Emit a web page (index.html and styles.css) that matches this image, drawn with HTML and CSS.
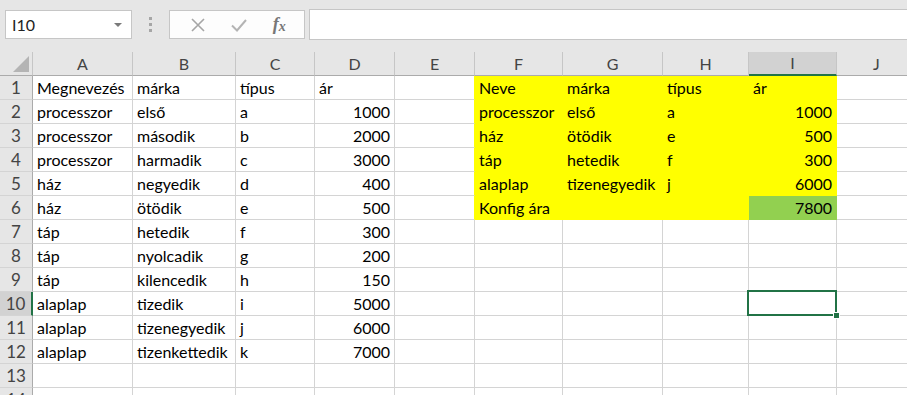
FILE: index.html
```html
<!DOCTYPE html>
<html lang="hu">
<head>
<meta charset="UTF-8">
<title>Munkafüzet</title>
<link rel="stylesheet" href="styles.css">
</head>
<body>
<div class="toolbar">
  <div class="namebox">
    <span class="ref">I10</span>
    <span class="caret"></span>
  </div>
  <div class="grip"><i></i><i></i><i></i></div>
  <div class="fbtns">
    <svg class="ico" width="16" height="16" viewBox="0 0 16 16"><path d="M2 2 L14 14 M14 2 L2 14" stroke="#a6a6a6" stroke-width="1.6" fill="none"/></svg>
    <svg class="ico" width="18" height="16" viewBox="0 0 18 16"><path d="M2 8.5 L7 13.5 L16 3" stroke="#b4b4b4" stroke-width="2" fill="none"/></svg>
    <span class="fx">f<sub>x</sub></span>
  </div>
  <div class="finput"></div>
</div>

<table class="sheet">
  <thead>
    <tr>
      <th class="corner c0"><span class="tri"></span></th>
      <th class="cA">A</th><th class="cB">B</th><th class="cC">C</th><th class="cD">D</th>
      <th class="cE">E</th><th class="cF">F</th><th class="cG">G</th><th class="cH">H</th>
      <th class="cI sel-col">I</th><th class="cJ">J</th>
    </tr>
  </thead>
  <tbody>
    <tr><th>1</th><td>Megnevezés</td><td>márka</td><td>típus</td><td>ár</td><td class="ye-edge"></td><td class="ye">Neve</td><td class="ye">márka</td><td class="ye">típus</td><td class="ye">ár</td><td></td></tr>
    <tr><th>2</th><td>processzor</td><td>első</td><td>a</td><td class="num">1000</td><td class="ye-edge"></td><td class="ye">processzor</td><td class="ye">első</td><td class="ye">a</td><td class="ye num">1000</td><td></td></tr>
    <tr><th>3</th><td>processzor</td><td>második</td><td>b</td><td class="num">2000</td><td class="ye-edge"></td><td class="ye">ház</td><td class="ye">ötödik</td><td class="ye">e</td><td class="ye num">500</td><td></td></tr>
    <tr><th>4</th><td>processzor</td><td>harmadik</td><td>c</td><td class="num">3000</td><td class="ye-edge"></td><td class="ye">táp</td><td class="ye">hetedik</td><td class="ye">f</td><td class="ye num">300</td><td></td></tr>
    <tr><th>5</th><td>ház</td><td>negyedik</td><td>d</td><td class="num">400</td><td class="ye-edge"></td><td class="ye">alaplap</td><td class="ye">tizenegyedik</td><td class="ye">j</td><td class="ye num">6000</td><td></td></tr>
    <tr><th>6</th><td>ház</td><td>ötödik</td><td>e</td><td class="num">500</td><td class="ye-edge"></td><td class="ye">Konfig ára</td><td class="ye"></td><td class="ye"></td><td class="gr num">7800</td><td></td></tr>
    <tr><th>7</th><td>táp</td><td>hetedik</td><td>f</td><td class="num">300</td><td></td><td></td><td></td><td></td><td></td><td></td></tr>
    <tr><th>8</th><td>táp</td><td>nyolcadik</td><td>g</td><td class="num">200</td><td></td><td></td><td></td><td></td><td></td><td></td></tr>
    <tr><th>9</th><td>táp</td><td>kilencedik</td><td>h</td><td class="num">150</td><td></td><td></td><td></td><td></td><td></td><td></td></tr>
    <tr><th class="sel-row">10</th><td>alaplap</td><td>tizedik</td><td>i</td><td class="num">5000</td><td></td><td></td><td></td><td></td><td class="active"><div class="cursor"><span class="handle"></span></div></td><td></td></tr>
    <tr><th>11</th><td>alaplap</td><td>tizenegyedik</td><td>j</td><td class="num">6000</td><td></td><td></td><td></td><td></td><td></td><td></td></tr>
    <tr><th>12</th><td>alaplap</td><td>tizenkettedik</td><td>k</td><td class="num">7000</td><td></td><td></td><td></td><td></td><td></td><td></td></tr>
    <tr><th>13</th><td></td><td></td><td></td><td></td><td></td><td></td><td></td><td></td><td></td><td></td></tr>
    <tr><th>14</th><td></td><td></td><td></td><td></td><td></td><td></td><td></td><td></td><td></td><td></td></tr>
  </tbody>
</table>
</body>
</html>
```

FILE: styles.css
```css
html, body {
margin: 0;
padding: 0;
}
body {
width: 907px;
height: 395px;
overflow: hidden;
background: #fff;
font-family: "Lato", "Liberation Sans", sans-serif;
}
.toolbar {
display: flex;
align-items: center;
height: 52px;
padding: 0 0 0 5px;
background: #e6e6e6;
box-sizing: border-box;
}
.namebox {
display: flex;
align-items: center;
justify-content: space-between;
width: 127px;
height: 29px;
box-sizing: border-box;
background: #fff;
border: 1px solid #c6c6c6;
padding: 0 9px 0 6px;
margin-top: -3px;
}
.ref {
font-size: 16px;
color: #222;
}
.caret {
width: 0;
height: 0;
border-left: 4px solid transparent;
border-right: 4px solid transparent;
border-top: 4px solid #7a7a7a;
}
.grip {
display: flex;
flex-direction: column;
gap: 3px;
width: 37px;
align-items: center;
margin-top: -3px;
}
.grip i {
display: block;
width: 3px;
height: 3px;
background: #a6a6a6;
}
.fbtns {
display: flex;
align-items: center;
justify-content: space-around;
width: 136px;
height: 29px;
box-sizing: border-box;
background: #fdfdfd;
border: 1px solid #c6c6c6;
padding: 0 6px 0 8px;
margin-top: -3px;
}
.fx {
font-family: "Liberation Serif", serif;
font-style: italic;
font-weight: bold;
font-size: 18px;
color: #777;
}
.fx sub {
font-size: 14px;
vertical-align: -1px;
}
.finput {
flex: 1;
height: 29px;
margin-left: 4px;
margin-top: -3px;
background: #fff;
border: 1px solid #c6c6c6;
border-right: none;
}
.sheet {
border-collapse: separate;
border-spacing: 0;
table-layout: fixed;
width: 917px;
font-size: 16px;
}
.sheet th, .sheet td {
box-sizing: border-box;
height: 24px;
padding: 0 4px;
white-space: nowrap;
overflow: visible;
line-height: 22px;
}
.sheet td {
border-right: 1px solid #d4d4d4;
border-bottom: 1px solid #d4d4d4;
color: #000;
text-align: left;
}
.sheet thead th {
background: #e6e6e6;
color: #444;
font-weight: normal;
text-align: center;
border-right: 1px solid #c6c6c6;
border-bottom: 1px solid #ababab;
padding: 0;
}
.sheet tbody th {
background: #e6e6e6;
color: #444;
font-weight: normal;
font-size: 17px;
text-align: center;
padding: 0;
border-right: 1px solid #ababab;
border-bottom: 1px solid #d4d4d4;
}
.c0 { width: 33px; }
.cA { width: 100px; }
.cB { width: 103px; }
.cC { width: 79px; }
.cD { width: 80px; }
.cE { width: 80px; }
.cF { width: 88px; }
.cG { width: 100px; }
.cH { width: 86px; }
.cI { width: 88px; }
.cJ { width: 80px; }
.corner {
position: relative;
}
.tri {
position: absolute;
right: 3px;
bottom: 3px;
width: 0;
height: 0;
border-left: 16px solid transparent;
border-bottom: 16px solid #b4b4b4;
}
.sheet thead th.sel-col {
background: #d2d2d2;
border-bottom: 2px solid #217346;
}
.sheet tbody th.sel-row {
background: #d2d2d2;
border-right: 2px solid #217346;
}
.num {
text-align: right !important;
padding-right: 3px;
}
.sheet td.ye {
background: #ffff00;
border-color: #ffff00;
}
.sheet td.ye-edge {
border-right-color: #ffff00;
}
.sheet td.gr {
background: #92d050;
border-color: #92d050;
}
.active {
position: relative;
}
.cursor {
position: absolute;
left: -2px;
top: -2px;
right: -1px;
bottom: -1px;
border: 2px solid #217346;
}
.handle {
position: absolute;
right: -5px;
bottom: -5px;
width: 5px;
height: 5px;
background: #217346;
border: 1px solid #fff;
}
```
